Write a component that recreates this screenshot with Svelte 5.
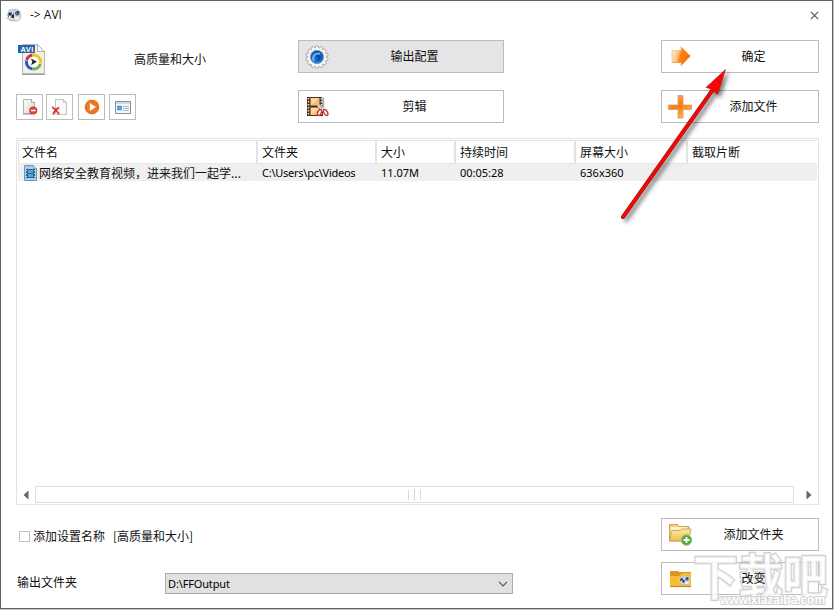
<script lang="ts">
  const columns = [
    { title: '文件名', width: 240, value: '网络安全教育视频，进来我们一起学...' },
    { title: '文件夹', width: 119, value: 'C:\\Users\\pc\\Videos' },
    { title: '大小', width: 79, value: '11.07M' },
    { title: '持续时间', width: 120, value: '00:05:28' },
    { title: '屏幕大小', width: 112, value: '636x360' },
    { title: '截取片断', width: 129, value: '' },
  ]

  let output = $state('D:\\FFOutput')
  let appendName = $state(false)

  // teeth around the settings gear
  const teeth = Array.from({ length: 14 }, (_, i) => (i * 360) / 14)
</script>

<svg class="defs" width="0" height="0">
  <defs>
    <linearGradient id="orange" x1="0" y1="0" x2="0.6" y2="1">
      <stop offset="0" stop-color="#ffc08a" />
      <stop offset="0.5" stop-color="#f97a14" />
      <stop offset="1" stop-color="#ffb43c" />
    </linearGradient>
    <linearGradient id="arrow" x1="0" x2="1" y2="0.3">
      <stop offset="0" stop-color="#fff3dc" />
      <stop offset="0.4" stop-color="#ffc489" />
      <stop offset="0.55" stop-color="#ff8412" />
      <stop offset="1" stop-color="#f76b05" />
    </linearGradient>
    <linearGradient id="page" x1="0" y1="0" x2="1" y2="1">
      <stop offset="0" stop-color="#ffffff" />
      <stop offset="1" stop-color="#d4d4d4" />
    </linearGradient>
    <linearGradient id="folder" x1="0" y1="0" x2="0" y2="1">
      <stop offset="0" stop-color="#ffe9a4" />
      <stop offset="1" stop-color="#edbd54" />
    </linearGradient>
    <linearGradient id="blue" x1="0" y1="0" x2="0" y2="1">
      <stop offset="0" stop-color="#1455a4" />
      <stop offset="1" stop-color="#2080d8" />
    </linearGradient>
  </defs>
</svg>

{#snippet reel()}
  <path d="M3 2 10 1 14 3 15 10 12 13 4 13 1 10Z" fill="#c9cdd1" stroke="#afb3b7" stroke-width=".6" />
  <circle cx="5" cy="7" r="4" fill="#71808e" stroke="#e9edf0" />
  <path d="M3 5h2v2H3zM6 7h2v3H6z" fill="#1d2c3b" />
  <path d="M3 8h2v2H3zM6 4h1v2H6z" fill="#dceaf6" />
  <circle cx="11.3" cy="5.3" r="3" fill="#566d85" stroke="#e9edf0" />
  <path d="M11 3h2v2h-2z" fill="#1f4160" />
  <path d="M9 9h5l-1 3H9z" fill="#edf0f2" />
{/snippet}

<div class="window">
  <header class="titlebar">
    <svg width="16" height="14" viewBox="0 0 16 14">{@render reel()}</svg>
    <span class="title">-&gt; AVI</span>
    <svg class="close" width="9" height="9" viewBox="0 0 9 9">
      <path d="m.9.9 7.200 7.200M8.100.9.9 8.100" stroke="#555" stroke-width="1.200" />
    </svg>
  </header>

  <section class="top">
    <div class="profile">
      <div class="format">
        <svg width="28" height="33" viewBox="0 0 28 33">
          <path d="M4.500 1.500h15l7 7v22h-22z" fill="#eeefef" stroke="#b7b7b7" />
          <path d="M4 31.500h23" stroke="#9b9b9b" />
          <path d="M19.500 1.500v7h7z" fill="#fff" stroke="#b2b2b2" />
          <circle cx="15.500" cy="19" r="8" fill="#fff" />
          <g fill="none" stroke-width="3">
            <path d="M14.500 12a7 7 0 0 0-5.800 5" stroke="#d6362d" />
            <path d="M8.600 17.500a7 7 0 0 0 6 8.500" stroke="#3658bd" />
            <path d="M15 26a7 7 0 0 0 7.300-5" stroke="#70b43a" />
            <path d="M22.400 20.500a7 7 0 0 0-7.900-8.500" stroke="#edc720" />
          </g>
          <path d="m13 15.500 6 3.300-6 3.400 1.200-3.400z" fill="#25282b" />
          <path d="M0 2h17v8H0z" fill="#2864aa" />
          <text x="2.500" y="8.800">AVI</text>
        </svg>
        <span class="quality">高质量和大小</span>
      </div>
      <div class="tools">
        <button aria-label="移除">
          <svg width="16" height="18" viewBox="0 0 16 18">
            <path d="M1.500 1.500h8l3 3v11h-11z" fill="url(#page)" stroke="#b3b3b3" />
            <path d="M9.500 1.500v3h3" fill="#fff" stroke="#aaa" />
            <path d="M1 16h9" stroke="#909090" />
            <circle cx="11.300" cy="12.500" r="3.800" fill="#dc4937" stroke="#bd291e" stroke-width=".5" />
            <path d="M9 12.500h4.600" stroke="#fff" stroke-width="1.500" />
          </svg>
        </button>
        <button aria-label="清空">
          <svg width="16" height="18" viewBox="0 0 16 18">
            <path d="M3.500 1.500h8l3 3v12h-11z" fill="#f8f8f8" stroke="#c2c2c2" />
            <path d="M11.500 1.500v3h3" fill="none" stroke="#c2c2c2" />
            <path d="M0 9c2.500 1.500 5 4 7 7M7 9.500c-2.500 1.500-4.800 3.500-6 7" fill="none" stroke="#dc2e25" stroke-width="1.700" />
          </svg>
        </button>
        <button aria-label="播放">
          <svg width="16" height="18" viewBox="0 0 16 18">
            <circle cx="8" cy="9" r="6.900" fill="#ef761f" stroke="#d96011" stroke-width=".8" />
            <path d="m5.800 5 6.200 4-6.200 4z" fill="#fff" />
          </svg>
        </button>
        <button aria-label="信息">
          <svg width="16" height="18" viewBox="0 0 16 18">
            <path d="M.5 3.500h15v12H.5z" fill="#f5f7f9" stroke="#859097" />
            <path d="M1 5h14" stroke="#afbec8" />
            <path d="M2.500 8h4v4h-4z" fill="#4da4e2" stroke="#2b76bb" stroke-width=".5" />
            <path d="M8 8.500h6M8 10.500h6M8 12.500h6" stroke="#a2bdd2" />
          </svg>
        </button>
      </div>
    </div>

    <div class="stack middle">
      <button class="action pressed">
        <svg width="24" height="24" viewBox="0 0 24 24">
          {#each teeth as angle}
            <rect x="10.500" y=".8" width="3" height="4" rx="1" fill="#f8f8f8" stroke="#8d8d8d" stroke-width=".7" transform="rotate({angle} 12 12)" />
          {/each}
          <circle cx="12" cy="12" r="9.200" fill="#f6f6f6" />
          <circle cx="12" cy="12" r="6.700" fill="url(#blue)" stroke="#7b94ae" stroke-width=".7" />
          <path d="M9 16c-2.500-4 .5-8 6-7" fill="none" stroke="#63b4ef" stroke-width="2" />
          <path d="M10.500 12c1-3.500 5.500-3 5.500.500 0 3-3.500 4.500-5.500 2.500 2 0 3-1 2.500-2.500-.5-1-1.500-1-2.500-.5z" fill="#0748a0" />
        </svg>
        <span>输出配置</span>
      </button>
      <button class="action">
        <svg width="24" height="24" viewBox="0 0 24 24">
          <path d="M2 2h16v19H2z" fill="#493021" />
          <path d="M5.500 3h9v7.500h-9zM5.500 12.500h9v7.500h-9z" fill="#f8bc7b" />
          <path d="m6 3 8 0-8 7M6 13h8l-8 7" fill="#ffd89e" />
          <path d="M3.500 3v17M16.500 3v17" stroke="#fbe5c2" stroke-width="1.500" stroke-dasharray="1.500 1.500" />
          <path d="m18.500 2 .5 10-3.500 5M13 10l6 5" fill="none" stroke="#e9eef0" stroke-width="2.800" />
          <path d="m18.500 3 0 9-3 4M13 9l6 6" fill="none" stroke="#a2acb0" />
          <ellipse cx="14.500" cy="17.500" rx="1.700" ry="3.200" fill="#fff" stroke="#cb3834" stroke-width="1.400" transform="rotate(25 14.500 17.500)" />
          <ellipse cx="20.700" cy="17.500" rx="1.700" ry="3.200" fill="#fff" stroke="#cb3834" stroke-width="1.400" transform="rotate(-30 20.700 17.500)" />
        </svg>
        <span>剪辑</span>
      </button>
    </div>

    <div class="stack right">
      <button class="action">
        <svg width="24" height="24" viewBox="0 0 24 24">
          <path d="M4 5.500h9V1.500l9.500 9.500L13 21v-3.500H4z" fill="url(#arrow)" stroke="#f3c08c" stroke-width=".8" />
          <path d="M4 17.500h9" stroke="#efa25c" />
        </svg>
        <span>确定</span>
      </button>
      <button class="action">
        <svg width="24" height="24" viewBox="0 0 24 24">
          <path d="M10 .500h5v9.500h8.500v4.500H15V23h-5v-8.500H.500V10H10z" fill="url(#orange)" stroke="#d99958" stroke-width=".8" />
        </svg>
        <span>添加文件</span>
      </button>
    </div>
  </section>

  <section class="list">
    <div class="row head">
      {#each columns as column}
        <div class="cell" style:width="{column.width}px">{column.title}</div>
      {/each}
    </div>
    <div class="row item">
      {#each columns as column, i}
        <div class="cell" style:width="{column.width}px">
          {#if i === 0}
            <svg width="13" height="16" viewBox="0 0 13 16">
              <path d="M.5.500h9l3 3v12H.5z" fill="#a9cdea" stroke="#6b97c0" />
              <path d="M9.500.500v3h3" fill="#dceefa" stroke="#77a4c9" />
              <path d="M2 4h9v9H2z" fill="#2b5f8c" />
              <path d="M4 5h5v3H4zM4 9h5v3H4z" fill="#58a4d6" />
              <path d="M2 5h1v1H2zM2 8h1v1H2zM2 11h1v1H2zM10 5h1v1h-1zM10 8h1v1h-1zM10 11h1v1h-1z" fill="#c4e2f6" />
            </svg>
          {/if}
          <span class:latin={i > 0} class:path={i === 1}>{column.value}</span>
        </div>
      {/each}
    </div>
    <div class="scroll">
      <svg width="6" height="10" viewBox="0 0 6 10"><path d="M5.500.500v9L.5 5z" fill="#666" /></svg>
      <div class="thumb"><i></i><i class="long"></i><i></i></div>
      <svg width="6" height="10" viewBox="0 0 6 10"><path d="M.5.500v9L5.500 5z" fill="#666" /></svg>
    </div>
  </section>

  <footer class="bottom">
    <div class="settings">
      <label class="append">
        <input type="checkbox" bind:checked={appendName} />
        <span>添加设置名称<b>[</b>高质量和大小<b class="end">]</b></span>
      </label>
      <div class="output">
        <span class="caption">输出文件夹</span>
        <button class="select">
          <span class="latin">{output}</span>
          <svg width="10" height="6" viewBox="0 0 10 6">
            <path d="m1 .8 4 4 4-4" fill="none" stroke="#555" stroke-width="1.200" />
          </svg>
        </button>
      </div>
    </div>
    <div class="stack folders">
      <button class="action">
        <svg width="24" height="24" viewBox="0 0 24 24">
          <path d="M1.500 18V1.500h8l1.500 2h10V18z" fill="#f6cf78" stroke="#c39343" stroke-width=".8" />
          <path d="M3 4h16v5H3z" fill="#fff3bd" />
          <path d="M1.500 18 4 7.500h8L14 6h9l-2.500 12z" fill="url(#folder)" stroke="#cb9b45" stroke-width=".8" />
          <circle cx="18.500" cy="17" r="5.200" fill="#55a936" stroke="#8dc96e" />
          <path d="M18.500 14v6M15.500 17h6" stroke="#fff" stroke-width="1.900" />
        </svg>
        <span>添加文件夹</span>
      </button>
      <button class="action">
        <svg width="24" height="24" viewBox="0 0 24 24">
          <path d="M2 19V4h8l1 1h12v14z" fill="#df941e" />
          <path d="M2 19V9h9l3-3h9v13z" fill="#f9bd31" />
          <path d="M2 19.500h21" stroke="#c78722" stroke-width="1.200" />
          <g transform="translate(10.500 8) scale(.75)">{@render reel()}</g>
        </svg>
        <span>改变</span>
      </button>
    </div>
  </footer>

  <svg class="pointer" width="130" height="170" viewBox="610 60 130 170">
    <g class="shadow">
      <path d="m623 217 91-129" stroke="#9e1515" stroke-width="4" stroke-linecap="round" />
      <path d="m623 217 91-129" stroke="#fa0505" stroke-width="2.800" stroke-linecap="round" />
      <path d="m725.500 69.500-8 25-4.500-4-3-2-4-1z" fill="#fa0505" stroke="#a31515" stroke-width=".6" />
    </g>
  </svg>

  <svg class="watermark" width="142" height="64" viewBox="690 545 142 64">
    <text class="mark" x="693" y="595" textLength="135" lengthAdjust="spacingAndGlyphs">下载吧</text>
    <text class="url" x="720" y="604" textLength="105" lengthAdjust="spacingAndGlyphs">www.xiazaiba.com</text>
  </svg>
</div>

<style>
  :global(body) {
    background: #c8c8c8;
    overflow: hidden;
  }

  .defs { position: absolute; }

  svg {
    display: block;
    flex: none;
  }

  .window {
    position: relative;
    box-sizing: border-box;
    width: 833px;
    height: 609px;
    border: 1px solid #616161;
    background: #fff;
    color: #111;
    font: 12px/16px 'Noto Sans CJK SC', sans-serif;
  }

  button {
    box-sizing: border-box;
    margin: 0;
    padding: 0;
    border: 1px solid #bcbcbc;
    background: #fff;
    color: inherit;
    font: inherit;
  }

  .titlebar {
    display: flex;
    align-items: center;
    height: 27px;
    padding: 0 13px 0 5px;
  }

  .title {
    margin-left: 8px;
    font: 12px/16px 'Open Sans', sans-serif;
  }

  .close {
    margin: 2px 0 0 auto;
  }

  .top {
    display: flex;
    height: 83px;
    margin: 12px 13px 0 15px;
  }

  .profile { width: 282px; }

  .format {
    display: flex;
    align-items: center;
    height: 38px;
    padding-left: 2px;
  }

  .format text {
    fill: #fff;
    font: bold 7.5px 'Liberation Sans', sans-serif;
    letter-spacing: 0.4px;
  }

  .quality { margin-left: 88px; }

  .tools {
    display: flex;
    gap: 3px;
    margin-top: 16px;
  }

  .tools button {
    display: grid;
    place-items: center;
    width: 27px;
    height: 26px;
  }

  .tools button:nth-child(3) { margin-left: 2px; }
  .tools button:nth-child(4) { margin-left: 1px; }

  .stack {
    display: flex;
    flex-direction: column;
    gap: 17px;
  }

  .middle { width: 206px; }

  .right {
    width: 158px;
    margin-left: auto;
  }

  .action {
    display: flex;
    align-items: center;
    height: 33px;
    padding-left: 6px;
  }

  .action span {
    z-index: 2;
    flex: 1;
    padding: 0 3px 2px 0;
    text-align: center;
  }

  .pressed { background: #e5e5e5; }

  .list {
    display: flex;
    flex-direction: column;
    box-sizing: border-box;
    width: 803px;
    height: 367px;
    margin: 15px 0 0 15px;
    padding: 1px;
    border: 1px solid #e3e3e3;
  }

  .row { display: flex; }

  .cell {
    box-sizing: border-box;
    flex: none;
    white-space: nowrap;
  }

  .head {
    box-sizing: border-box;
    height: 24px;
    border-top: 1px solid #e3e3e3;
    border-bottom: 1px solid #e6e6e6;
  }

  .head .cell {
    padding: 3px 0 0 4px;
    border-right: 2px solid #e3e3e3;
  }

  .head .cell:first-child {
    padding-left: 3px;
    border-left: 1px solid #e3e3e3;
  }

  .head .cell:last-child { border-right: 0; }

  .item {
    height: 17px;
    background: #efefef;
  }

  .item .cell {
    display: flex;
    align-items: center;
    padding-left: 4px;
  }

  .item .cell:first-child {
    gap: 2px;
    padding-left: 6px;
  }

  .latin {
    font: 11px/16px 'Noto Sans', sans-serif;
    color: #000;
  }

  .path { letter-spacing: -0.25px; }

  .scroll {
    display: flex;
    align-items: center;
    justify-content: space-between;
    height: 17px;
    margin-top: auto;
    padding: 0 5px;
  }

  .thumb {
    display: flex;
    align-items: center;
    justify-content: center;
    gap: 5px;
    box-sizing: border-box;
    width: 759px;
    height: 17px;
    margin: 0 12px 0 6px;
    border: 1px solid #dfdfdf;
  }

  .thumb i {
    width: 1px;
    height: 10px;
    background: #dadada;
  }

  .thumb .long { height: 12px; }

  .bottom {
    display: flex;
    justify-content: space-between;
    margin: 13px 13px 0 16px;
  }

  .append {
    display: flex;
    align-items: center;
    gap: 3px;
    height: 18px;
    margin: 9px 0 0 2px;
  }

  .append input {
    appearance: none;
    box-sizing: border-box;
    width: 11px;
    height: 11px;
    margin: 0;
    border: 1px solid #bfbfbf;
    background: #fff;
  }

  .append b {
    display: inline-block;
    width: 12px;
    font-weight: normal;
    text-align: right;
  }

  .append .end { text-align: left; }

  .output {
    display: flex;
    align-items: center;
    margin-top: 28px;
  }

  .caption { padding-bottom: 3px; }

  .select {
    display: flex;
    align-items: center;
    justify-content: space-between;
    width: 348px;
    height: 21px;
    margin-left: 88px;
    padding: 0 4px 0 2px;
    border-color: #acacac;
    background: #e1e1e1;
  }

  .select .latin { letter-spacing: -0.15px; }

  .folders {
    gap: 11px;
    width: 158px;
  }

  .pointer {
    position: absolute;
    top: 59px;
    left: 609px;
    z-index: 3;
  }

  .shadow { filter: drop-shadow(3px 3px 2px rgb(0 0 0 / 50%)); }

  .watermark {
    position: absolute;
    top: 544px;
    left: 689px;
    z-index: 1;
    pointer-events: none;
  }

  .watermark text {
    stroke: #d0d0d0;
    paint-order: stroke;
  }

  .mark {
    fill: rgb(255 255 255 / 75%);
    font: bold 49px 'Noto Sans CJK SC', sans-serif;
    stroke-width: 2.5px;
  }

  .url {
    fill: #fff;
    font: bold 12px 'Liberation Sans', sans-serif;
    stroke-width: 1.8px;
  }
</style>
